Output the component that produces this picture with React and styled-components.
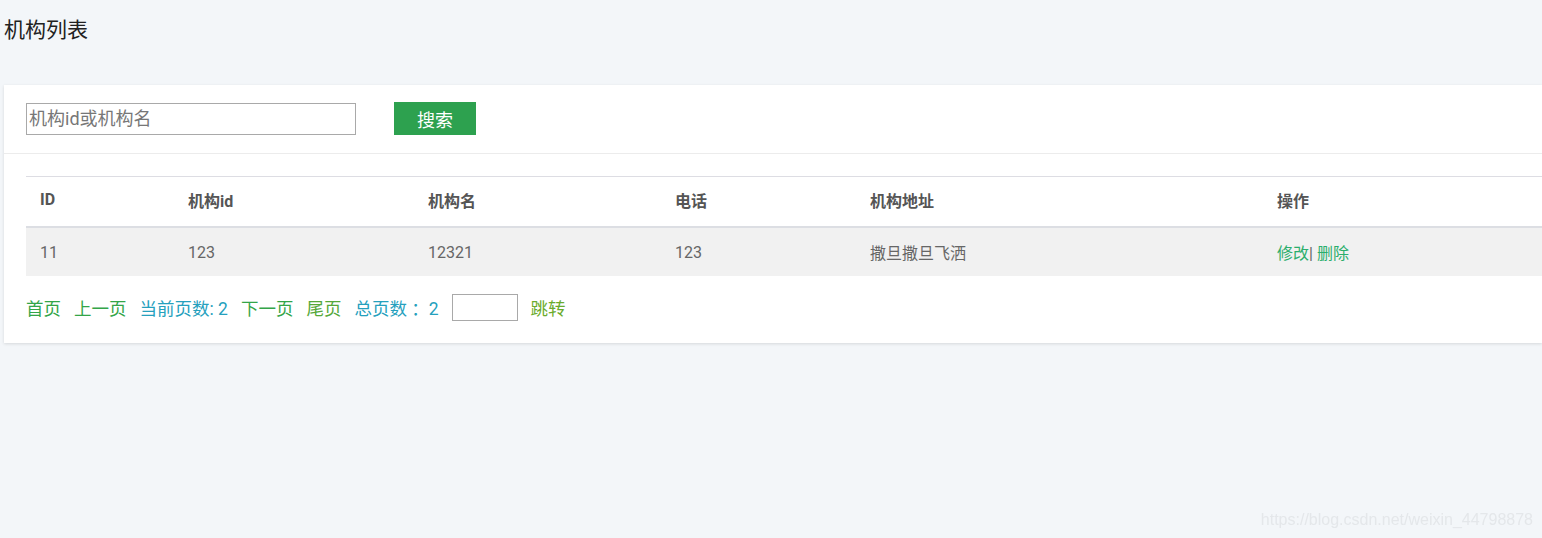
import React from 'react';
import styled, { createGlobalStyle } from 'styled-components';

const GlobalStyle = createGlobalStyle`
  html, body {
    margin: 0;
    padding: 0;
    background: #f3f6f9;
    font-family: Roboto, "Noto Sans CJK SC", sans-serif;
  }
`;

const Page = styled.div`
  padding: 0 0 0 4px;
  min-height: 538px;
  box-sizing: border-box;
`;

const Title = styled.h2`
  margin: 0;
  height: 85px;
  padding-top: 15px;
  box-sizing: border-box;
  font-size: 21px;
  font-weight: normal;
  line-height: 30px;
  color: #222;
`;

const Card = styled.div`
  background: #fff;
  box-shadow: 0 1px 3px rgba(0, 0, 0, 0.12);
  padding-bottom: 22px;
`;

const SearchBar = styled.div`
  display: flex;
  align-items: center;
  gap: 38px;
  padding: 17px 22px 18px;
  border-bottom: 1px solid #ececec;
`;

const SearchInput = styled.input`
  width: 330px;
  height: 32px;
  box-sizing: border-box;
  border: 1px solid #a9a9a9;
  padding: 0 2px;
  font-size: 18px;
  font-family: Roboto, "Noto Sans CJK SC", sans-serif;
  color: #333;
  outline: none;
  &::placeholder {
    color: #777;
  }
`;

const SearchButton = styled.button`
  width: 82px;
  height: 33px;
  border: none;
  background: #2da14f;
  color: #fff;
  font-size: 18px;
  font-family: Roboto, "Noto Sans CJK SC", sans-serif;
  padding: 0;
`;

const TableWrap = styled.div`
  padding: 22px 0 0 22px;
`;

const Table = styled.table`
  width: 100%;
  border-collapse: collapse;
  border-top: 1px solid #dddde3;
  font-size: 16px;
`;

const HeadCell = styled.th`
  text-align: left;
  font-weight: bold;
  color: #555;
  height: 45px;
  padding: 0 14px 4px;
  border-bottom: 2px solid #dcdee3;
  width: ${(p) => p.$w || 'auto'};
`;

const Row = styled.tr`
  background: #f1f1f1;
`;

const Cell = styled.td`
  color: #666;
  height: 48px;
  padding: 0 14px;
`;

const ActionLink = styled.a`
  color: #2bae6c;
  text-decoration: none;
`;

const Pager = styled.div`
  display: flex;
  align-items: center;
  gap: 13px;
  padding: 18px 0 0 22px;
  font-size: 17.5px;
`;

const PageLink = styled.a`
  color: ${(p) => p.$color || '#33a548'};
  text-decoration: none;
`;

const PageText = styled.span`
  color: #25a0bd;
`;

const JumpInput = styled.input`
  width: 66px;
  height: 27px;
  box-sizing: border-box;
  border: 1px solid #a9a9a9;
  outline: none;
`;

const Watermark = styled.div`
  position: fixed;
  right: 9px;
  bottom: 9px;
  font-size: 16px;
  color: #e4e7ea;
  font-family: "Liberation Sans", Arial, sans-serif;
`;

const columns = [
  { title: 'ID', w: '120px' },
  { title: '机构id', w: '212px' },
  { title: '机构名', w: '219px' },
  { title: '电话', w: '167px' },
  { title: '机构地址', w: '379px' },
  { title: '操作' },
];

const rows = [{ id: '11', orgId: '123', name: '12321', phone: '123', addr: '撒旦撒旦飞洒' }];

export default function App() {
  return (
    <Page>
      <GlobalStyle />
      <Title>机构列表</Title>
      <Card>
        <SearchBar>
          <SearchInput placeholder="机构id或机构名" />
          <SearchButton>搜索</SearchButton>
        </SearchBar>
        <TableWrap>
          <Table>
            <thead>
              <tr>
                {columns.map((c) => (
                  <HeadCell key={c.title} $w={c.w}>{c.title}</HeadCell>
                ))}
              </tr>
            </thead>
            <tbody>
              {rows.map((r) => (
                <Row key={r.id}>
                  <Cell>{r.id}</Cell>
                  <Cell>{r.orgId}</Cell>
                  <Cell>{r.name}</Cell>
                  <Cell>{r.phone}</Cell>
                  <Cell>{r.addr}</Cell>
                  <Cell>
                    <ActionLink href="#">修改</ActionLink>| <ActionLink href="#">删除</ActionLink>
                  </Cell>
                </Row>
              ))}
            </tbody>
          </Table>
        </TableWrap>
        <Pager>
          <PageLink href="#">首页</PageLink>
          <PageLink href="#">上一页</PageLink>
          <PageText>当前页数: 2</PageText>
          <PageLink href="#">下一页</PageLink>
          <PageLink href="#" $color="#55a83a">尾页</PageLink>
          <PageText>总页数 ：2</PageText>
          <JumpInput />
          <PageLink href="#" $color="#6aab2c">跳转</PageLink>
        </Pager>
      </Card>
      <Watermark>https://blog.csdn.net/weixin_44798878</Watermark>
    </Page>
  );
}
